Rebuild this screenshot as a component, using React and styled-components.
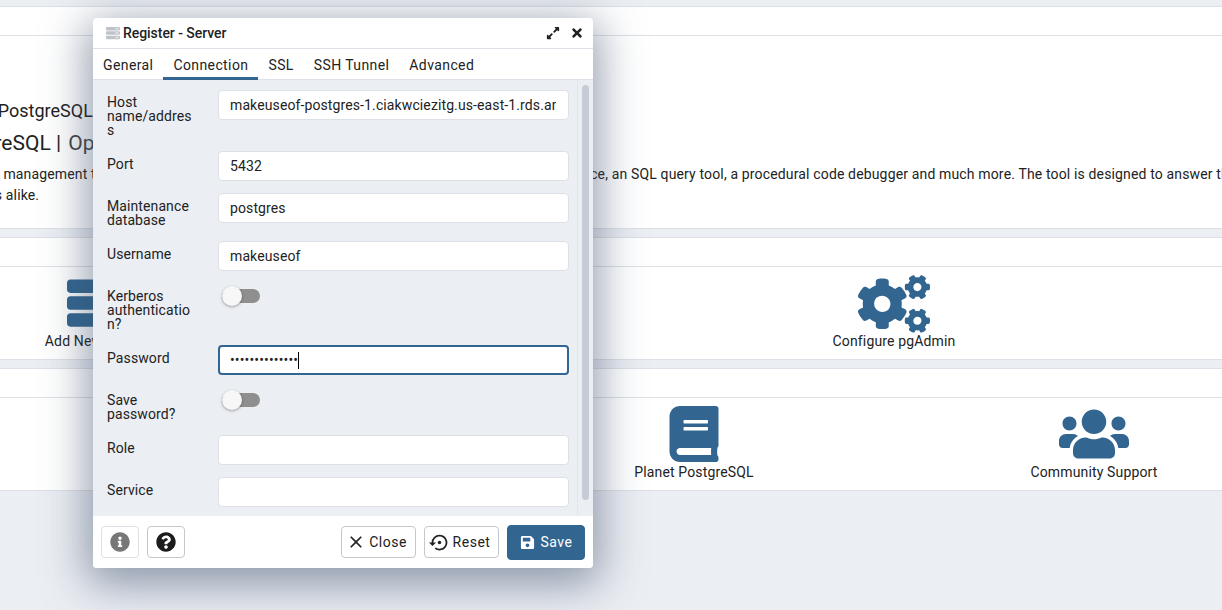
import React from 'react';
import styled, { createGlobalStyle } from 'styled-components';
import { FaBook, FaCogs, FaExpandAlt, FaInfoCircle, FaQuestionCircle, FaSave, FaServer, FaTimes, FaUsers } from 'react-icons/fa';
import { MdClose, MdSettingsBackupRestore } from 'react-icons/md';

const GlobalStyle = createGlobalStyle`
  html, body {
    margin: 0;
    height: 100%;
    overflow: hidden;
    background: #ebeef3;
  }
  * { box-sizing: border-box; }
  body {
    font-family: Roboto, "Liberation Sans", sans-serif;
    color: #222;
  }
`;

const TABS = ['General', 'Connection', 'SSL', 'SSH Tunnel', 'Advanced'];

const Viewport = styled.div`
  position: relative;
  width: 1222px;
  height: 610px;
  overflow: hidden;
`;

// the dashboard is wider than the window and starts off to the left of it
const Dashboard = styled.div`
  width: 1708px;
  margin-left: -360px;
  padding-top: 6px;
  display: flex;
  flex-direction: column;
  gap: 8px;
`;

const Panel = styled.section`
  background: #fff;
  border-top: 1px solid #dde0e6;
  border-bottom: 1px solid #dde0e6;
`;

const PanelHead = styled.div`
  height: 29px;
  border-bottom: 1px solid #dde0e6;
`;

const Welcome = styled.div`
  height: 192px;
  padding: 63px 0 0 0;
  white-space: nowrap;
`;

const WelcomeTitle = styled.div`
  font-size: 18px;
  line-height: 24px;
  padding-left: 172px;
`;

const WelcomeSub = styled.div`
  font-size: 21px;
  line-height: 28px;
  margin-top: 6px;
  padding-left: 67px;
  span { color: #444; margin-left: 2px; }
`;

const WelcomeText = styled.p`
  margin: 7px 0 0;
  font-size: 14px;
  line-height: 20.5px;
  letter-spacing: 0.15px;
  padding-left: 61px;
`;

const LinkGrid = styled.div`
  display: grid;
  grid-template-columns: repeat(${p => p.$cols}, 1fr);
  height: 92px;
  margin: 0 54px;
`;

const LinkItem = styled.div`
  display: flex;
  flex-direction: column;
  align-items: center;
  padding-top: ${p => p.$top || 8}px;
  font-size: 14px;
  line-height: 16px;
  letter-spacing: 0.15px;
  color: #222;
  svg { color: #326690; display: block; }
`;

const LinkCaption = styled.span`
  padding-left: ${p => p.$inset || 0}px;
`;

const IconSlot = styled.div`
  height: ${p => p.$h || 58}px;
  display: flex;
  align-items: center;
  justify-content: center;
`;

const Dialog = styled.div`
  position: absolute;
  left: 93px;
  top: 18px;
  width: 500px;
  height: 550px;
  display: flex;
  flex-direction: column;
  background: #fff;
  border-radius: 4px;
  overflow: hidden;
  box-shadow: 0 10px 44px 6px rgba(60, 78, 105, 0.55);
`;

const TitleBar = styled.div`
  height: 31px;
  flex: none;
  display: flex;
  align-items: center;
  padding: 0 9px 0 13px;
  border-bottom: 1px solid #dde0e6;
`;

const TitleText = styled.div`
  font-size: 14px;
  font-weight: 500;
  margin-left: 3px;
  flex: 1;
  letter-spacing: -0.05px;
`;

const TitleAction = styled.div`
  display: flex;
  margin-left: 10px;
  color: #222;
`;

const TabBar = styled.div`
  height: 31px;
  flex: none;
  display: flex;
  border-bottom: 1px solid #dde0e6;
`;

const Tab = styled.div`
  padding: 0 10px;
  font-size: 14px;
  line-height: 32px;
  letter-spacing: 0.4px;
  color: #222;
  border-bottom: 3px solid ${p => (p.$active ? '#326690' : 'transparent')};
  height: 31px;
`;

const FormArea = styled.div`
  position: relative;
  flex: 1;
  min-height: 0;
  background: #ebeef3;
  padding: 10px 24px 0 14px;
  overflow: hidden;
`;

const ScrollTrack = styled.div`
  position: absolute;
  right: 0;
  top: 0;
  bottom: 0;
  width: 16px;
  padding: 5px 4px 0;
  border-left: 1px solid #e2e5ea;
`;

const ScrollThumb = styled.div`
  height: 415px;
  border-radius: 4px;
  background: #c6ccd6;
`;

const Row = styled.div`
  display: flex;
  align-items: flex-start;
  margin-bottom: 12px;
`;

const Label = styled.div`
  width: 111px;
  padding: ${p => (p.$snug ? '5px 25px 2px 0' : '6px 25px 2px 0')};
  font-size: 14px;
  line-height: 14px;
  letter-spacing: 0.1px;
  overflow-wrap: anywhere;
  color: #222;
`;

const Input = styled.input`
  display: block;
  width: 351px;
  height: 30px;
  padding: 0 12px 0 11px;
  background: #fff;
  border: 1px solid #dde0e6;
  border-radius: 4px;
  font: 14px Roboto, sans-serif;
  letter-spacing: 0.11px;
  color: #222;
  outline: none;
`;

const PasswordBox = styled.div`
  width: 351px;
  height: 30px;
  padding: 0 10px;
  display: flex;
  align-items: center;
  background: #fff;
  border: 2px solid #326690;
  border-radius: 4px;
  font-size: 14px;
  letter-spacing: 0.15px;
  color: #222;
`;

const Caret = styled.span`
  display: inline-block;
  width: 1px;
  height: 17px;
  background: #000;
`;

const SwitchCell = styled.div`
  width: 351px;
`;

const Switch = styled.div`
  position: relative;
  width: 38px;
  height: 14px;
  margin-top: 6px;
  margin-left: 4px;
  border-radius: 7px;
  background: #8f8f8f;
  &::before {
    content: '';
    position: absolute;
    left: 0;
    top: -3px;
    width: 20px;
    height: 20px;
    border-radius: 50%;
    background: #f7f7f7;
    box-shadow: 0 1px 3px rgba(0, 0, 0, 0.35);
  }
`;

const Footer = styled.div`
  height: 52px;
  flex: none;
  display: flex;
  align-items: center;
  padding: 0 8px;
  background: #fff;
`;

const IconButton = styled.div`
  width: 38px;
  height: 32px;
  display: flex;
  align-items: center;
  justify-content: center;
  margin-right: 8px;
  border: 1px solid ${p => p.$edge};
  border-radius: 4px;
  color: ${p => p.$tint};
`;

const Spacer = styled.div`
  flex: 1;
`;

const Button = styled.div`
  width: ${p => p.$w}px;
  height: ${p => (p.$primary ? 35 : 32)}px;
  margin-left: 8px;
  padding-right: ${p => (p.$primary ? 0 : 4)}px;
  display: flex;
  align-items: center;
  justify-content: center;
  gap: ${p => (p.$primary ? 6 : 3)}px;
  border: 1px solid ${p => (p.$primary ? '#326690' : '#c4c7cc')};
  border-radius: 4px;
  background: ${p => (p.$primary ? '#326690' : '#fff')};
  color: ${p => (p.$primary ? '#fff' : '#222')};
  font-size: 14px;
  letter-spacing: 0.5px;
`;

const FormRow = ({ label, snug, children }) => (
  <Row>
    <Label $snug={snug}>{label}</Label>
    {children}
  </Row>
);

export default function App() {
  return (
    <Viewport>
      <GlobalStyle />
      <Dashboard>
        <Panel>
          <PanelHead />
          <Welcome>
            <WelcomeTitle>Management Tools for PostgreSQL</WelcomeTitle>
            <WelcomeSub>Feature rich | Maximises PostgreSQL | <span>Open Source</span></WelcomeSub>
            <WelcomeText>
              pgAdmin is an Open Source administration and management tool for the PostgreSQL database. It includes a graphical administration interface, an SQL query tool, a procedural code debugger and much more. The tool is designed to answer the needs
              <br />
              of developers, DBAs and system administrators alike.
            </WelcomeText>
          </Welcome>
        </Panel>
        <Panel>
          <PanelHead />
          <LinkGrid $cols={2}>
            <LinkItem $top={6}><IconSlot $h={60}><FaServer size={54} /></IconSlot><LinkCaption $inset={3}>Add New Server</LinkCaption></LinkItem>
            <LinkItem><IconSlot><FaCogs size={72} /></IconSlot><LinkCaption>Configure pgAdmin</LinkCaption></LinkItem>
          </LinkGrid>
        </Panel>
        <Panel>
          <PanelHead />
          <LinkGrid $cols={4}>
            <LinkItem $top={5}><IconSlot $h={61}><FaBook size={56} /></IconSlot><LinkCaption>PostgreSQL Documentation</LinkCaption></LinkItem>
            <LinkItem $top={5}><IconSlot $h={61}><FaBook size={56} /></IconSlot><LinkCaption>pgAdmin Website</LinkCaption></LinkItem>
            <LinkItem $top={5}><IconSlot $h={61}><FaBook size={56} /></IconSlot><LinkCaption>Planet PostgreSQL</LinkCaption></LinkItem>
            <LinkItem $top={5}><IconSlot $h={61}><FaUsers size={70} /></IconSlot><LinkCaption>Community Support</LinkCaption></LinkItem>
          </LinkGrid>
        </Panel>
      </Dashboard>

      <Dialog>
        <TitleBar>
          <FaServer size={14} color="#bfc2c7" />
          <TitleText>Register - Server</TitleText>
          <TitleAction><FaExpandAlt size={14} /></TitleAction>
          <TitleAction><FaTimes size={14} /></TitleAction>
        </TitleBar>
        <TabBar>
          {TABS.map(t => <Tab key={t} $active={t === 'Connection'}>{t}</Tab>)}
        </TabBar>
        <FormArea>
          <ScrollTrack><ScrollThumb /></ScrollTrack>
          <FormRow label="Host name/address" snug><Input readOnly value="makeuseof-postgres-1.ciakwciezitg.us-east-1.rds.amazonaws.com" /></FormRow>
          <FormRow label="Port"><Input readOnly value="5432" /></FormRow>
          <FormRow label="Maintenance database"><Input readOnly value="postgres" /></FormRow>
          <FormRow label="Username"><Input readOnly value="makeuseof" /></FormRow>
          <FormRow label="Kerberos authentication?"><SwitchCell><Switch /></SwitchCell></FormRow>
          <FormRow label="Password"><PasswordBox>••••••••••••••<Caret /></PasswordBox></FormRow>
          <FormRow label="Save password?"><SwitchCell><Switch /></SwitchCell></FormRow>
          <FormRow label="Role"><Input readOnly value="" /></FormRow>
          <FormRow label="Service"><Input readOnly value="" /></FormRow>
        </FormArea>
        <Footer>
          <IconButton $edge="#dde0e6" $tint="#777"><FaInfoCircle size={20} /></IconButton>
          <IconButton $edge="#c4c7cc" $tint="#1c1c1c"><FaQuestionCircle size={20} /></IconButton>
          <Spacer />
          <Button $w={75}><MdClose size={20} />Close</Button>
          <Button $w={75}><MdSettingsBackupRestore size={21} />Reset</Button>
          <Button $w={78} $primary><FaSave size={15} />Save</Button>
        </Footer>
      </Dialog>
    </Viewport>
  );
}
